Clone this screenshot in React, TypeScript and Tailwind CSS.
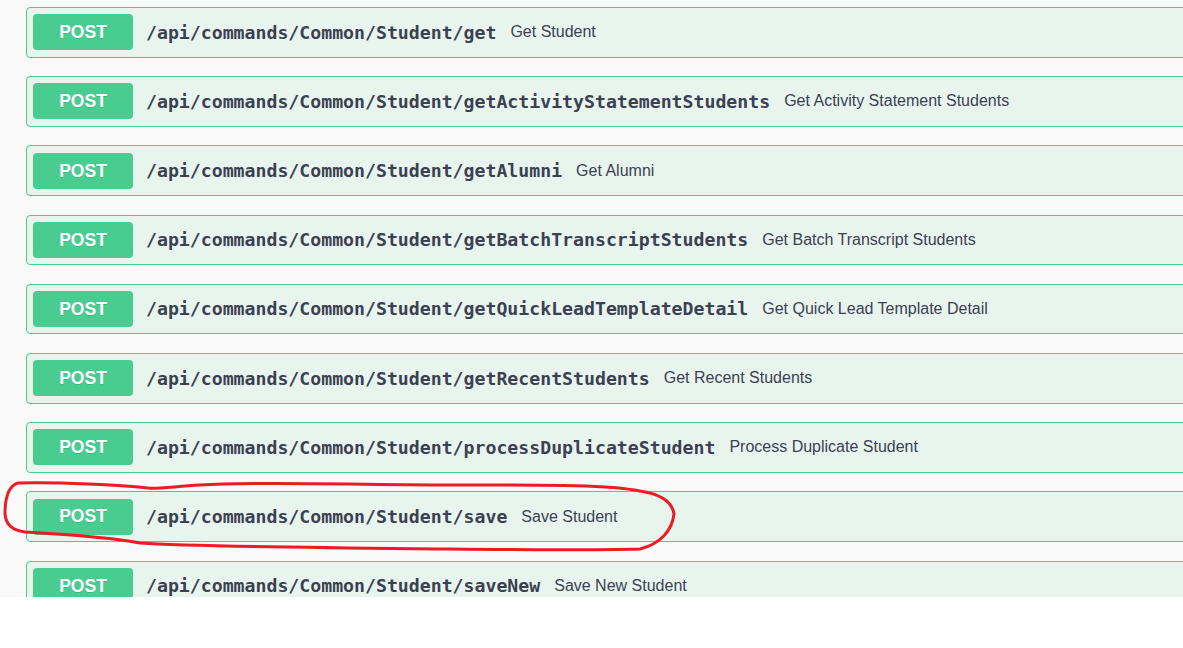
import React from "react";

const rows: [string, string][] = [
  ["/api/commands/Common/Student/get", "Get Student"],
  ["/api/commands/Common/Student/getActivityStatementStudents", "Get Activity Statement Students"],
  ["/api/commands/Common/Student/getAlumni", "Get Alumni"],
  ["/api/commands/Common/Student/getBatchTranscriptStudents", "Get Batch Transcript Students"],
  ["/api/commands/Common/Student/getQuickLeadTemplateDetail", "Get Quick Lead Template Detail"],
  ["/api/commands/Common/Student/getRecentStudents", "Get Recent Students"],
  ["/api/commands/Common/Student/processDuplicateStudent", "Process Duplicate Student"],
  ["/api/commands/Common/Student/save", "Save Student"],
  ["/api/commands/Common/Student/saveNew", "Save New Student"],
];

export default function App() {
  return (
    <div className="relative w-[1183px] h-[648px] bg-white overflow-hidden">
      <div className="h-[597px] bg-[#fafafa] overflow-hidden pl-[26px] pt-[7px] flex flex-col gap-[18.6px]">
        {rows.map(([path, desc]) => (
          <div
            key={path}
            className="w-[1200px] shrink-0 h-[50.6px] border border-[#49cc90] bg-[#e8f5ef] rounded-[4px] flex items-center pl-[6px]"
          >
            <div
              className="w-[100px] h-[36px] rounded-[4px] bg-[#49cc90] text-white font-bold text-[17.5px] flex items-center justify-center [text-shadow:0_1px_0_rgba(0,0,0,0.1)]"
              style={{ fontFamily: '"Liberation Sans", Arial, sans-serif' }}
            >
              POST
            </div>
            <span
              className="ml-[13px] text-[#3b4151] font-bold text-[18.2px]"
              style={{ fontFamily: '"DejaVu Sans Mono", monospace' }}
            >
              {path}
            </span>
            <span
              className="ml-[14px] text-[#3b4151] text-[16px]"
              style={{ fontFamily: '"Liberation Sans", Arial, sans-serif' }}
            >
              {desc}
            </span>
          </div>
        ))}
      </div>
      <svg
        className="absolute left-0 top-0 pointer-events-none"
        width="1183"
        height="648"
        viewBox="0 0 1183 648"
      >
        <path
          d="M148 488 C 120 485, 60 482, 18 483 C 8 486, 5 500, 5 514 C 6 525, 12 530, 25 532 C 60 534, 110 537, 140 543 C 200 547, 350 548, 450 549 C 540 550, 600 550, 640 549 C 660 544, 672 531, 674 514 C 672 501, 660 494, 640 491 C 610 485, 560 485, 450 485 C 350 485, 260 481, 200 485 C 170 487, 155 489, 148 488 Z"
          fill="none"
          stroke="#ed1c24"
          strokeWidth="3"
          strokeLinejoin="round"
        />
      </svg>
    </div>
  );
}
